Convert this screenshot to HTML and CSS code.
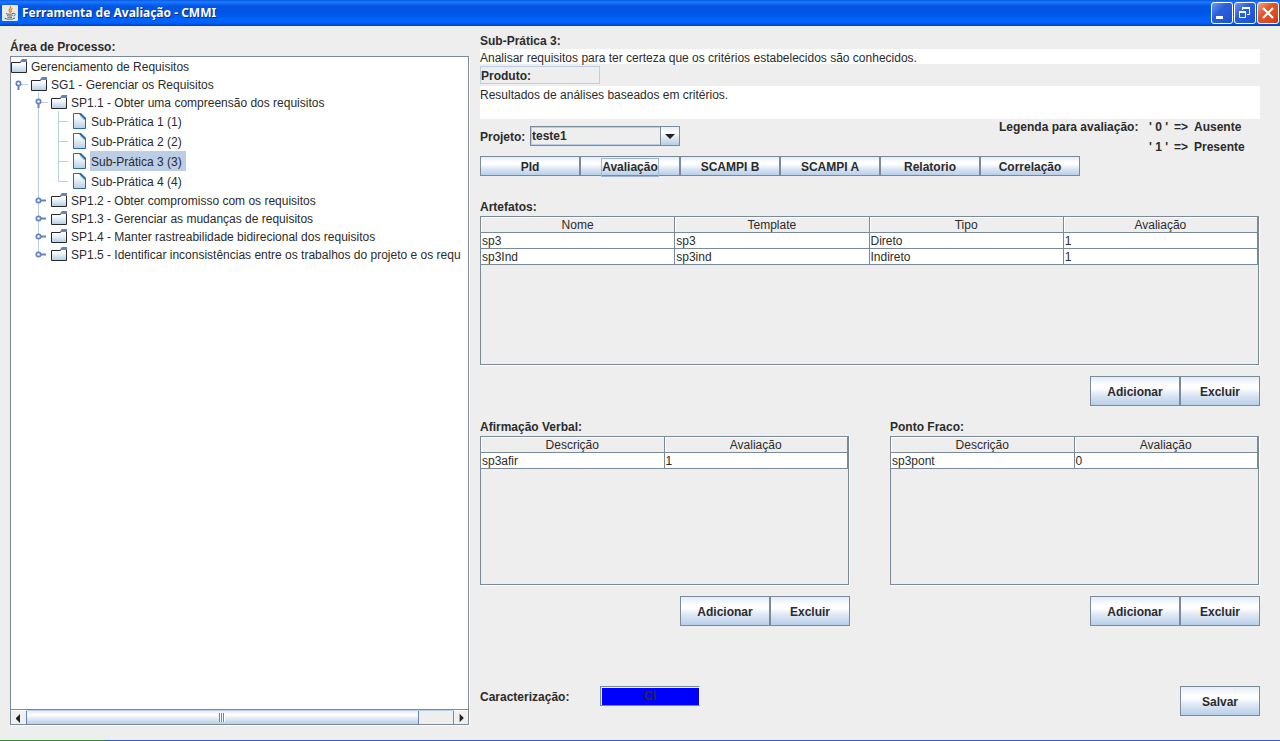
FILE: index.html
```html
<!DOCTYPE html>
<html lang="pt-BR">
<head>
<meta charset="utf-8">
<title>Ferramenta de Avaliação - CMMI</title>
<link rel="stylesheet" href="styles.css">
</head>
<body>
<svg class="symbols" aria-hidden="true">
  <defs>
    <linearGradient id="fill" x1="0" y1="0" x2="0" y2="1"><stop offset="0" stop-color="#fff"/><stop offset=".3" stop-color="#f4f8fc"/><stop offset="1" stop-color="#b4cfe6"/></linearGradient>
    <symbol id="folder" viewBox="0 0 16 16">
      <path d="M1 5h8l1-1h5v10H1z" fill="url(#fill)"/>
      <path d="M.5 14.5v-10H9l1.500-1h5v11z" fill="none" stroke="#292929"/>
      <path d="M9 4l1-2 1-1h5v3z" fill="#6382bf"/>
    </symbol>
    <symbol id="leaf" viewBox="0 0 16 16">
      <path d="M2.500.5h7l5 5v10h-12z" fill="url(#fill)" stroke="#2f68a3"/>
      <path d="M8 0h2l5 5v2h-1L8 1z" fill="#2f68a3"/><path d="M9 3l4 4" stroke="#b8cfe5"/>
    </symbol>
    <symbol id="open" viewBox="0 0 20 18">
      <path d="M10 9.500h7" stroke="#b8cfe5"/><path d="M7.500 11v4" stroke="#6382bf" stroke-width="2"/>
      <circle cx="7.500" cy="8.500" r="2.200" fill="#fff" stroke="#6382bf" stroke-width="1.700"/>
    </symbol>
    <symbol id="closed" viewBox="0 0 20 18">
      <path d="M10 9.500h5" stroke="#6382bf" stroke-width="2"/>
      <circle cx="7.500" cy="9.500" r="2.200" fill="#fff" stroke="#6382bf" stroke-width="1.700"/>
    </symbol>
  </defs>
</svg>

<header class="titlebar">
  <svg class="java" viewBox="0 0 16 16" aria-hidden="true">
    <rect width="16" height="16" rx="1" fill="#e9e9e6"/>
    <path d="M8.500 1c1.500 2-3 3-1 5.500l1 1.500M10.500 3.500c-2 1-2 2-1 3.500" fill="none" stroke="#e8762c" stroke-width="1.200"/>
    <path d="M4 8.500c2 1 5 1 7 0M5 10.500c2 .7 4 .7 5.500 0M5.500 12.300c1.500.5 3 .5 4.500 0M2.500 13c2 1.700 8 1.700 10.500 0M11 8.500c3-.7 3 2 .5 2.500" fill="none" stroke="#49698c"/>
  </svg>
  <h1 class="title">Ferramenta de Avaliação - CMMI</h1>
  <div class="window-buttons">
    <button class="win" aria-label="Minimizar"><svg viewBox="0 0 20 20"><path d="M4 14.500h7" stroke="#fff" stroke-width="3"/></svg></button>
    <button class="win" aria-label="Restaurar"><svg viewBox="0 0 20 20" fill="none" stroke="#fff"><path d="M7.500 7V4.500h7v7H12"/><path d="M7 5h8" stroke-width="2"/><path d="M4.500 8.500h6v6h-6z"/><path d="M4 9h7" stroke-width="2"/></svg></button>
    <button class="win close" aria-label="Fechar"><svg viewBox="0 0 20 20"><path d="M5 5l10 10M15 5L5 15" stroke="#fff" stroke-width="2.200"/></svg></button>
  </div>
</header>

<main class="content">
  <section class="process">
    <h2 class="label">Área de Processo:</h2>
    <div class="tree-pane">
      <div class="tree">
        <div class="row"><svg class="icon"><use href="#folder"/></svg><span class="name">Gerenciamento de Requisitos</span></div>
        <ul class="branch">
          <li><div class="row"><svg class="handle"><use href="#open"/></svg><svg class="icon"><use href="#folder"/></svg><span class="name">SG1 - Gerenciar os Requisitos</span></div>
            <ul class="branch nested lined">
              <li><div class="row"><svg class="handle"><use href="#open"/></svg><svg class="icon"><use href="#folder"/></svg><span class="name">SP1.1 - Obter uma compreensão dos requisitos</span></div>
                <ul class="branch nested leaves">
                  <li class="row leaf"><svg class="icon"><use href="#leaf"/></svg><span class="name">Sub-Prática 1 (1)</span></li>
                  <li class="row leaf"><svg class="icon"><use href="#leaf"/></svg><span class="name">Sub-Prática 2 (2)</span></li>
                  <li class="row leaf"><svg class="icon"><use href="#leaf"/></svg><span class="name selected">Sub-Prática 3 (3)</span></li>
                  <li class="row leaf"><svg class="icon"><use href="#leaf"/></svg><span class="name">Sub-Prática 4 (4)</span></li>
                </ul>
              </li>
              <li class="row"><svg class="handle"><use href="#closed"/></svg><svg class="icon"><use href="#folder"/></svg><span class="name">SP1.2 - Obter compromisso com os requisitos</span></li>
              <li class="row"><svg class="handle"><use href="#closed"/></svg><svg class="icon"><use href="#folder"/></svg><span class="name">SP1.3 - Gerenciar as mudanças de requisitos</span></li>
              <li class="row"><svg class="handle"><use href="#closed"/></svg><svg class="icon"><use href="#folder"/></svg><span class="name">SP1.4 - Manter rastreabilidade bidirecional dos requisitos</span></li>
              <li class="row"><svg class="handle"><use href="#closed"/></svg><svg class="icon"><use href="#folder"/></svg><span class="name">SP1.5 - Identificar inconsistências entre os trabalhos do projeto e os requ</span></li>
            </ul>
          </li>
        </ul>
      </div>
      <div class="scrollbar">
        <button class="arrow" aria-label="Rolar para a esquerda"><svg viewBox="0 0 15 15"><path d="M9 3v9L5 8V7z" fill="#222"/></svg></button>
        <div class="track"><div class="thumb"><span class="grip"></span></div></div>
        <button class="arrow right" aria-label="Rolar para a direita"><svg viewBox="0 0 15 15"><path d="M6 3v9l4-4V7z" fill="#222"/></svg></button>
      </div>
    </div>
  </section>

  <section class="details">
    <h2 class="label">Sub-Prática 3:</h2>
    <p class="text">Analisar requisitos para ter certeza que os critérios estabelecidos são conhecidos.</p>
    <h2 class="product">Produto:</h2>
    <p class="text tall">Resultados de análises baseados em critérios.</p>

    <div class="project-row">
      <div class="project">
        <label for="projeto">Projeto:</label>
        <div class="combo">
          <select id="projeto"><option>teste1</option></select>
          <span class="combo-arrow"><svg viewBox="0 0 18 18"><path d="M4 7h10l-5 5z" fill="#222"/></svg></span>
        </div>
      </div>
      <div class="legend">
        <span>Legenda para avaliação:</span><span class="code">' 0 '</span><span>=&gt;</span><span>Ausente</span>
        <span></span><span class="code">' 1 '</span><span>=&gt;</span><span>Presente</span>
      </div>
    </div>

    <nav class="toolbar">
      <button class="btn">PId</button><button class="btn"><span class="focused">Avaliação</span></button><button class="btn">SCAMPI B</button><button class="btn">SCAMPI A</button><button class="btn">Relatorio</button><button class="btn">Correlação</button>
    </nav>

    <h2 class="label">Artefatos:</h2>
    <div class="table-pane">
      <table>
        <thead><tr><th>Nome</th><th>Template</th><th>Tipo</th><th>Avaliação</th></tr></thead>
        <tbody>
          <tr><td>sp3</td><td>sp3</td><td>Direto</td><td>1</td></tr>
          <tr><td>sp3Ind</td><td>sp3ind</td><td>Indireto</td><td>1</td></tr>
        </tbody>
      </table>
    </div>
    <div class="actions"><button class="btn add">Adicionar</button><button class="btn remove">Excluir</button></div>

    <div class="pair">
      <section>
        <h2 class="label">Afirmação Verbal:</h2>
        <div class="table-pane">
          <table>
            <thead><tr><th>Descrição</th><th>Avaliação</th></tr></thead>
            <tbody><tr><td>sp3afir</td><td>1</td></tr></tbody>
          </table>
        </div>
        <div class="actions"><button class="btn add">Adicionar</button><button class="btn remove">Excluir</button></div>
      </section>
      <section>
        <h2 class="label">Ponto Fraco:</h2>
        <div class="table-pane">
          <table>
            <thead><tr><th>Descrição</th><th>Avaliação</th></tr></thead>
            <tbody><tr><td>sp3pont</td><td>0</td></tr></tbody>
          </table>
        </div>
        <div class="actions"><button class="btn add">Adicionar</button><button class="btn remove">Excluir</button></div>
      </section>
    </div>

    <div class="footer-row">
      <label for="carac">Caracterização:</label>
      <input id="carac" class="rating" value="CI" readonly>
      <button class="btn remove save">Salvar</button>
    </div>
  </section>
</main>
<div class="taskbar"><span class="start"></span></div>
</body>
</html>
```
FILE: styles.css
```css
* { box-sizing: border-box; }
body {
  margin: 0;
  min-height: 100vh;
  display: flex;
  flex-direction: column;
  background: #eee;
  color: #2b2b2b;
  font: 12px/16px "Liberation Sans", Arial, sans-serif;
}
h1, h2, p, ul { margin: 0; padding: 0; }
ul { list-style: none; }
button, input, select { font: inherit; color: inherit; margin: 0; padding: 0; border: 0; border-radius: 0; }
svg { display: block; flex: none; }
.symbols { position: absolute; width: 0; height: 0; }

.titlebar {
  display: flex;
  align-items: center;
  gap: 4px;
  height: 26px;
  padding: 0 1px 0 2px;
  background: linear-gradient(#0a5ce8 0, #1b7aff 2px, #0456e4 6px, #0054e3 12px, #0364ff 21px, #0260f8 23px, #0141c0 26px);
}
.java { width: 16px; height: 16px; }
.title {
  flex: 1;
  color: #fff;
  font: bold 12px/18px "Noto Sans", sans-serif;
  text-shadow: 1px 1px 0 #0a2c8a;
}
.window-buttons { display: flex; gap: 1px; }
.win {
  width: 22px;
  height: 22px;
  border: 1px solid #fff;
  border-radius: 3px;
  background: linear-gradient(135deg, #7297ef, #2a5edb 40%, #2458d8 70%, #1b4cc4);
}
.close { background: linear-gradient(135deg, #f0a088, #e0532c 40%, #dc4a20 75%, #b83c14); }

.content {
  flex: 1;
  display: grid;
  grid-template-columns: 46fr 78fr;
  gap: 10px;
  padding: 4px 20px 15px 10px;
}
.label { height: 20px; font-size: 12px; line-height: 22px; }
.process { display: flex; flex-direction: column; min-width: 0; padding-top: 6px; }
.tree-pane {
  flex: 1;
  display: flex;
  flex-direction: column;
  border: 1px solid #7a8a99;
  background: #fff;
  box-shadow: 1px 1px 0 #fff;
  margin-right: 1px;
}
.tree { flex: 1; overflow: hidden; white-space: nowrap; }
.row { display: flex; align-items: center; height: 18px; }
.handle { width: 20px; height: 18px; }
.icon { width: 16px; height: 16px; margin-right: 3px; }
.name { padding: 2px 4px 0 1px; line-height: 18px; }
.selected { background: #bccde6; }
.nested { padding-left: 20px; }
.lined { background: linear-gradient(#b8cfe5, #b8cfe5) 27px 0 / 1px calc(100% - 9px) no-repeat; }
.leaves { background: linear-gradient(#b8cfe5, #b8cfe5) 27px 0 / 1px calc(100% - 10px) no-repeat; }
.leaf {
  height: 20px;
  padding-left: 20px;
  background: linear-gradient(#b8cfe5, #b8cfe5) 7px 10px / 10px 1px no-repeat;
}

.scrollbar { display: flex; height: 15px; border-top: 1px solid #7a8a99; background: #eee; }
.arrow { width: 15px; background: #f0f0f0; border-top: 1px solid #fff; }
.arrow.right { border-left: 1px solid #7a8a99; }
.track { flex: 1; border-top: 1px solid #b8cfe5; }
.thumb {
  display: flex;
  align-items: center;
  justify-content: center;
  width: 92%;
  height: 100%;
  border: solid #6382bf;
  border-width: 0 1px;
  background: linear-gradient(#e4ebf7, #fff 30%, #dfe8f5 60%, #b8cfe5);
}
.grip {
  width: 6px;
  height: 9px;
  background: repeating-linear-gradient(90deg, #6382bf 0 1px, #fff 1px 2px);
}

.details { min-width: 0; }
.details > .label:first-child { height: 19px; }
.text { height: 15px; background: #fff; line-height: 18px; }
.product {
  width: 120px;
  height: 18px;
  margin: 2px 0;
  border: 1px solid #b8cfe5;
  font-size: 12px;
  line-height: 18px;
}
.tall { height: 33px; }
.project-row { display: flex; justify-content: space-between; height: 37px; font-weight: bold; }
.project { display: flex; align-items: center; height: 20px; margin-top: 7px; }
.project label { width: 50px; padding-top: 2px; }
.combo { position: relative; width: 150px; height: 20px; }
.combo select {
  appearance: none;
  width: 100%;
  height: 100%;
  padding-left: 1px;
  border: 1px solid #7a8a99;
  background: #eee;
  box-shadow: inset 0 0 0 1px #b8cfe5;
}
.combo-arrow {
  position: absolute;
  top: 1px;
  right: 1px;
  width: 19px;
  height: 18px;
  border-left: 1px solid #7a8a99;
  background: linear-gradient(#e4ebf7, #fff 30%, #dfe8f5 60%, #b8cfe5);
  pointer-events: none;
}
.legend {
  display: grid;
  grid-template-columns: 150px 25px 20px 66px;
  line-height: 20px;
  height: 40px;
  margin-top: -2px;
}
.code { white-space: pre; }

.toolbar { display: flex; margin-bottom: 20px; }
.toolbar .btn { width: 100px; height: 20px; }
.btn {
  padding-top: 2px;
  border: 1px solid #7a8a99;
  background: linear-gradient(#e4ebf7, #fff 30%, #fff 40%, #dce6f4 65%, #b8cfe9);
  font-weight: bold;
}
.focused { display: inline-block; height: 17px; box-shadow: 0 0 0 1px #a3b8cc; }

.table-pane {
  height: 149px;
  margin-right: 1px;
  border: 1px solid #7a8a99;
  box-shadow: 1px 1px 0 #fff;
}
table { width: 100%; table-layout: fixed; border-spacing: 0; }
th, td { height: 16px; padding: 1px 1px 0; border: solid #7a8a99; border-width: 0 1px 1px 0; line-height: 14px; }
th { padding-top: 2px; line-height: 13px; font-weight: normal; box-shadow: inset 1px 1px 0 #fff; }
td { background: #fff; }
.actions { display: flex; justify-content: flex-end; padding: 11px 0 10px; }
.actions .btn, .save { height: 30px; }
.add { width: 90px; }
.remove { width: 80px; }
.pair { display: grid; grid-template-columns: 1fr 1fr; gap: 40px; }
.footer-row { display: flex; margin-top: 50px; }
.footer-row label { width: 120px; line-height: 22px; font-weight: bold; }
.rating {
  width: 100px;
  height: 20px;
  border: 1px solid #7a8a99;
  border-right-color: #fff;
  background: #00f;
  box-shadow: inset 1px 1px 0 #eee;
  text-align: center;
  font-weight: bold;
}
.save { margin-left: auto; }
.taskbar { height: 1px; background: #245edb; }
.start { display: block; width: 105px; height: 1px; background: #2f8a2f; }
```
